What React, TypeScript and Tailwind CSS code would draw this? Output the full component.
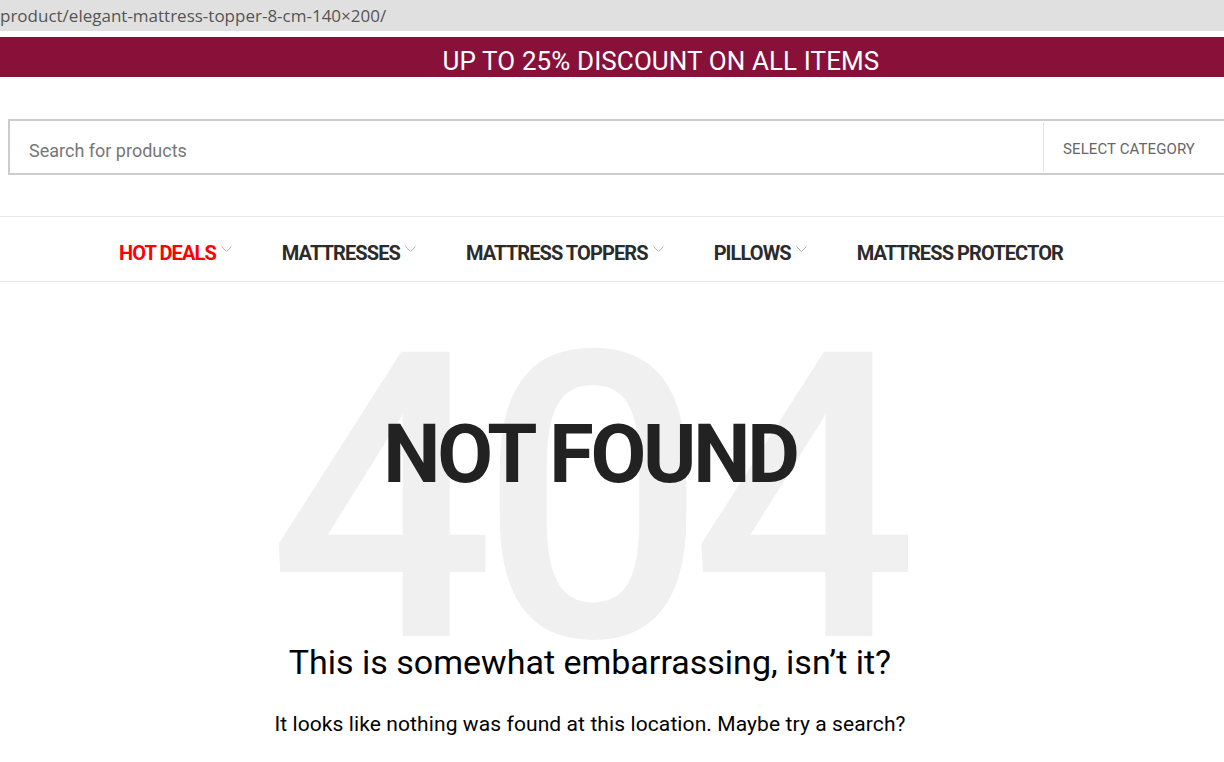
import React from 'react';

const navItems = [
  { label: 'HOT DEALS', hot: true, caret: true },
  { label: 'MATTRESSES', caret: true },
  { label: 'MATTRESS TOPPERS', caret: true },
  { label: 'PILLOWS', caret: true },
  { label: 'MATTRESS PROTECTOR', caret: false },
];

const Caret = () => (
  <svg className="w-[11px] h-[6px] ml-[5px] -mt-[8px]" viewBox="0 0 11 6" fill="none" stroke="#b5b5b5" strokeWidth={1}>
    <path d="M0.5 0.5 L5.5 5.5 L10.5 0.5" />
  </svg>
);

const App: React.FC = () => {
  return (
    <div className="w-[1224px] h-[762px] overflow-hidden bg-white" style={{ fontFamily: 'Roboto, "Noto Sans", sans-serif' }}>
      {/* address bar strip */}
      <div className="h-[31px] bg-[#e0e0e0] flex items-center text-[17px] text-[#555] whitespace-nowrap" style={{ fontFamily: '"Open Sans", sans-serif' }}>
        product/elegant-mattress-topper-8-cm-140×200/
      </div>
      <div className="h-[6px] bg-white" />

      {/* promo banner */}
      <div className="h-[40px] bg-[#891039] flex items-center justify-center pl-[98px] pt-[7px]">
        <span className="text-white text-[26px] leading-none tracking-[0.1px]">UP TO 25% DISCOUNT ON ALL ITEMS</span>
      </div>

      {/* search */}
      <div className="pt-[42px] pl-[8px]">
        <div className="h-[56px] w-[1240px] border-2 border-[#cccccc] flex items-stretch">
          <div className="flex-1 flex items-center pl-[19px] pt-[6px] text-[18px] text-[#777]">Search for products</div>
          <div className="w-[203px] border-l border-[#e3e3e3] my-[1px] flex items-center pl-[19px] pt-[4px] text-[15px] text-[#666] tracking-[0.1px]">
            SELECT CATEGORY
          </div>
        </div>
      </div>

      {/* nav */}
      <div className="mt-[41px] border-t border-b border-[#e8e8e8] h-[66px] flex items-center pl-[119px] pt-[8px]">
        {navItems.map((item, i) => (
          <div key={item.label} className={`flex items-center ${i > 0 ? 'ml-[50px]' : ''}`}>
            <span
              className={`text-[20px] font-bold tracking-[-0.9px] ${item.hot ? 'text-[#ff0000]' : 'text-[#2b2b2b]'}`}
            >
              {item.label}
            </span>
            {item.caret && <Caret />}
          </div>
        ))}
      </div>

      {/* 404 */}
      <div className="grid justify-items-center -ml-[44px] mt-[20px]">
        <div className="[grid-area:1/1] mt-[28px] -ml-[10px] text-[400px] leading-[340px] font-medium text-[#f0f0f0] tracking-[-16px] select-none">
          404
        </div>
        <div className="[grid-area:1/1] flex flex-col items-center">
          <h1 className="mt-[112px] text-[81px] leading-none font-bold text-[#222] tracking-[-3.2px]">NOT FOUND</h1>
          <h2 className="mt-[150px] text-[34px] leading-none text-black">This is somewhat embarrassing, isn’t it?</h2>
          <p className="mt-[35px] text-[21px] leading-none text-black tracking-[0.1px]">It looks like nothing was found at this location. Maybe try a search?</p>
        </div>
      </div>
    </div>
  );
};

export default App;
